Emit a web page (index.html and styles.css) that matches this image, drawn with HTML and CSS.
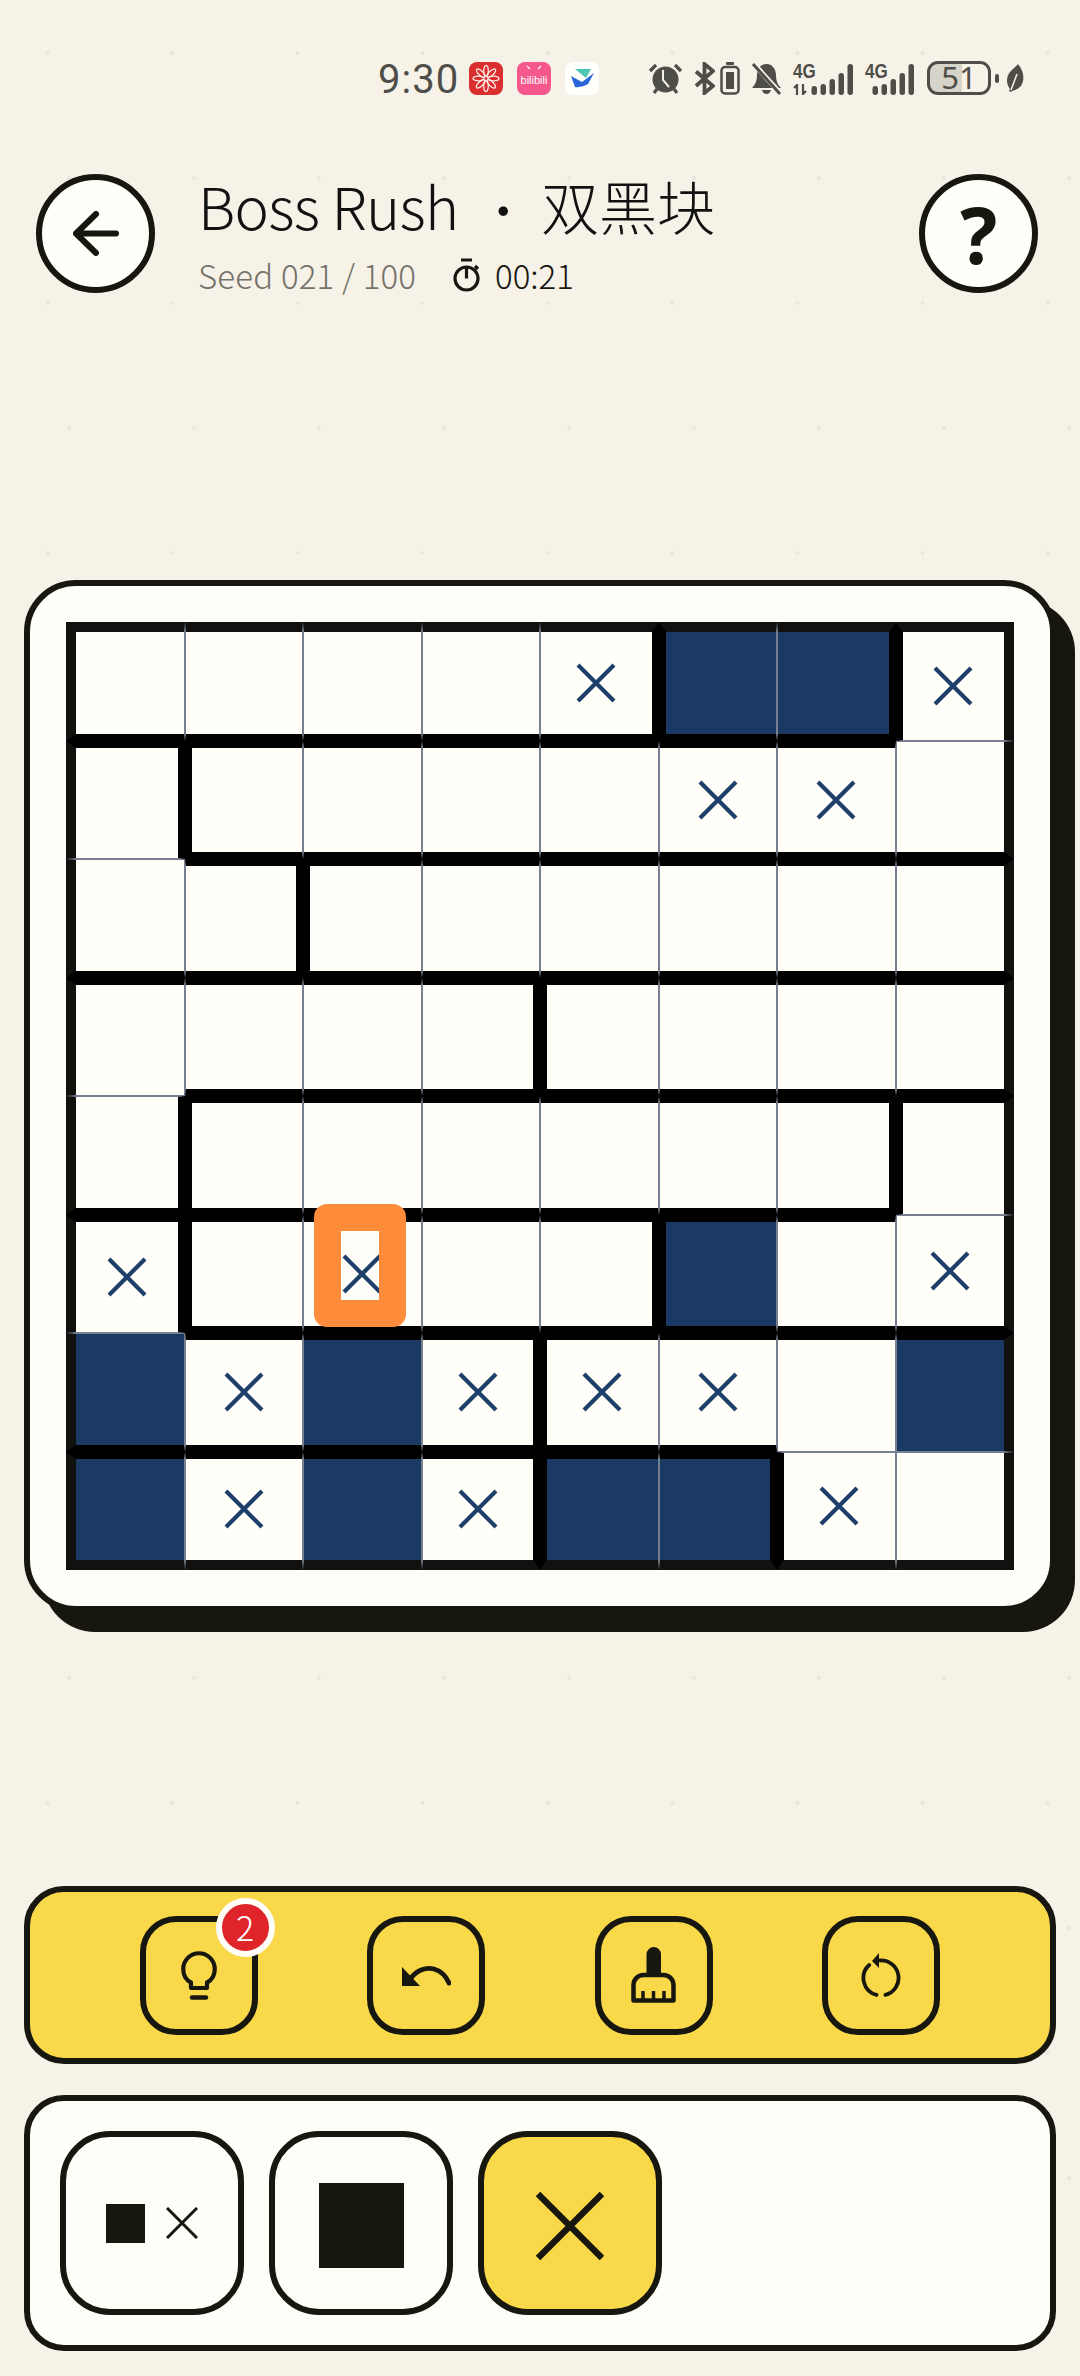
FILE: index.html
```html
<!DOCTYPE html>
<html lang="zh">

<head>
  <meta charset="UTF-8">
  <meta name="viewport" content="width=device-width, initial-scale=1.0">
  <title>Boss Rush</title>
  <link rel="stylesheet" href="styles.css">
</head>

<body>
  <svg class="defs">
    <symbol id="x" viewBox="0 0 40 40">
      <path d="M2 2L38 38M38 2L2 38" fill="none" stroke="currentColor" stroke-width="4.2" />
    </symbol>
  </svg>

  <!-- Barra de estado -->
  <div class="status">
    <span class="time">9:30</span>
    <div class="apps">
      <svg class="app" viewBox="0 0 34 33">
        <rect width="34" height="33" rx="8" fill="#d92f2e" />
        <g fill="none" stroke="#ffe9e4" stroke-width="1.300">
          <ellipse cx="17" cy="9" rx="2.300" ry="5.500" />
          <ellipse cx="17" cy="9" rx="2.300" ry="5.500" transform="rotate(45 17 16.500)" />
          <ellipse cx="17" cy="9" rx="2.300" ry="5.500" transform="rotate(90 17 16.500)" />
          <ellipse cx="17" cy="9" rx="2.300" ry="5.500" transform="rotate(135 17 16.500)" />
          <ellipse cx="17" cy="9" rx="2.300" ry="5.500" transform="rotate(180 17 16.500)" />
          <ellipse cx="17" cy="9" rx="2.300" ry="5.500" transform="rotate(225 17 16.500)" />
          <ellipse cx="17" cy="9" rx="2.300" ry="5.500" transform="rotate(270 17 16.500)" />
          <ellipse cx="17" cy="9" rx="2.300" ry="5.500" transform="rotate(315 17 16.500)" />
        </g>
      </svg>
      <svg class="app" viewBox="0 0 34 33">
        <rect width="34" height="33" rx="8" fill="#f4588c" />
        <path d="M10 4L13 7M24 4L21 7" stroke="#ffe3ec" stroke-width="1.500" />
        <text x="17" y="22" class="bili">bilibili</text>
      </svg>
      <svg class="app" viewBox="0 0 34 33">
        <rect width="34" height="33" rx="8" fill="#fffffb" />
        <path d="M10 7H26L21 16Z" fill="#4dc6b4" />
        <path d="M6 14L17 20L29 11L23 22Q17 26 10 25Z" fill="#2a66d9" />
      </svg>
    </div>
    <div class="sysicons">
      <svg class="sys alarm" viewBox="0 0 35 33">
        <path d="M2 9L8 3M33 9L27 3M6 31L9 27M29 31L26 27" fill="none" stroke="#4f4d48" stroke-width="3.200" />
        <circle cx="17.500" cy="17.500" r="13" fill="#4f4d48" />
        <path d="M15 8V18L21 25" fill="none" stroke="#f6f2e8" stroke-width="2" />
      </svg>
      <svg class="sys bt" viewBox="0 0 21 33">
        <path d="M2 9.500L19 24L10.500 31V2L19 9L2 24" fill="none" stroke="#4f4d48" stroke-width="3.800" />
      </svg>
      <svg class="sys cell-batt" viewBox="0 0 20 33">
        <rect x="6" y="0" width="8" height="3" rx="1" fill="#4f4d48" />
        <rect x="1.500" y="5" width="17" height="26.500" rx="3.500" fill="none" stroke="#4f4d48" stroke-width="2.500" />
        <rect x="6" y="10" width="8" height="17" fill="#4f4d48" />
      </svg>
      <svg class="sys mute" viewBox="0 0 31 33">
        <path d="M15.500 2C9 2 6 8 6 13C6 19 4 23 1 26H30C27 23 25 19 25 13C25 8 22 2 15.500 2Z" fill="#4f4d48" />
        <path d="M11 28H20Q19 32 15.500 32Q12 32 11 28Z" fill="#4f4d48" />
        <path d="M3 2L30 32" stroke="#f6f2e8" stroke-width="5" />
        <path d="M2 2L29 32" stroke="#4f4d48" stroke-width="3" />
      </svg>
      <div class="signal sig-a">
        <span class="net">4G</span>
        <svg class="updown" viewBox="0 0 14 11">
          <path d="M4 11V1L1 4M10 0V10L13 7" fill="none" stroke="#4f4d48" stroke-width="2.200" />
        </svg>
        <svg class="bars" viewBox="0 0 60 31">
          <rect x="18.500" y="22" width="5.500" height="9" rx="2.700" />
          <rect x="27.500" y="20" width="5.500" height="11" rx="2.700" />
          <rect x="36.500" y="15" width="5.500" height="16" rx="2.700" />
          <rect x="45.500" y="9" width="5.500" height="22" rx="2.700" />
          <rect x="54.500" y="0" width="5.500" height="31" rx="2.700" />
        </svg>
      </div>
      <div class="signal sig-b">
        <span class="net">4G</span>
        <svg class="bars" viewBox="0 0 50 31">
          <rect x="7.500" y="22" width="5.500" height="9" rx="2.700" />
          <rect x="16.500" y="20" width="5.500" height="11" rx="2.700" />
          <rect x="25.500" y="15" width="5.500" height="16" rx="2.700" />
          <rect x="34.500" y="9" width="5.500" height="22" rx="2.700" />
          <rect x="43.500" y="0" width="5.500" height="31" rx="2.700" />
        </svg>
      </div>
      <div class="battery"><span>51</span></div>
      <div class="battery-nub"></div>
      <svg class="sys leaf" viewBox="0 0 18 28">
        <path d="M12 0C17 6 18 12 17 17C16 23 11 26 6 27L5 28L3 27L4 25C0 20 0 13 4 8C6 5 10 3 12 0Z" fill="#4f4d48" />
        <path d="M5 26L11 10" stroke="#f6f2e8" stroke-width="1.500" />
      </svg>
    </div>
  </div>

  <header class="header">
    <button class="round-btn">
      <svg class="back-icon" viewBox="0 0 46 45">
        <path d="M43 22.500H3M23 3L3 22.500L23 42" fill="none" stroke="#171710" stroke-width="6" stroke-linecap="round" stroke-linejoin="round" />
      </svg>
    </button>
    <div class="heading">
      <h1 class="title"><span class="latin">Boss Rush</span> <span class="dot">・</span> 双黑块</h1>
      <div class="sub">
        <span class="seed">Seed 021 / 100</span>
        <svg class="timer" viewBox="0 0 27 34">
          <path d="M8 2H19M13.500 9V20.500M22 8L25 11" fill="none" stroke="#171710" stroke-width="3.200" />
          <circle cx="13.500" cy="20.500" r="11.500" fill="none" stroke="#171710" stroke-width="3.200" />
        </svg>
        <span class="clock">00:21</span>
      </div>
    </div>
    <button class="round-btn help">?</button>
  </header>

  <main>
    <section class="board">
      <div class="grid">
        <!-- fila 1 -->
        <div class="cell wb"></div>
        <div class="cell wb"></div>
        <div class="cell wb"></div>
        <div class="cell wb"></div>
        <div class="cell wb wr"><svg class="mark"><use href="#x" /></svg></div>
        <div class="cell wb wl on"></div>
        <div class="cell wb wr on"></div>
        <div class="cell wl"><svg class="mark"><use href="#x" /></svg></div>
        <!-- fila 2 -->
        <div class="cell wt wr"></div>
        <div class="cell wt wb wl"></div>
        <div class="cell wt wb"></div>
        <div class="cell wt wb"></div>
        <div class="cell wt wb"></div>
        <div class="cell wt wb"><svg class="mark"><use href="#x" /></svg></div>
        <div class="cell wt wb"><svg class="mark"><use href="#x" /></svg></div>
        <div class="cell wb"></div>
        <!-- fila 3 -->
        <div class="cell wb"></div>
        <div class="cell wt wb wr"></div>
        <div class="cell wt wb wl"></div>
        <div class="cell wt wb"></div>
        <div class="cell wt wb"></div>
        <div class="cell wt wb"></div>
        <div class="cell wt wb"></div>
        <div class="cell wt wb"></div>
        <!-- fila 4 -->
        <div class="cell wt"></div>
        <div class="cell wt wb"></div>
        <div class="cell wt wb"></div>
        <div class="cell wt wb wr"></div>
        <div class="cell wt wb wl"></div>
        <div class="cell wt wb"></div>
        <div class="cell wt wb"></div>
        <div class="cell wt wb"></div>
        <!-- fila 5 -->
        <div class="cell wb wr"></div>
        <div class="cell wt wb wl"></div>
        <div class="cell wt wb"></div>
        <div class="cell wt wb"></div>
        <div class="cell wt wb"></div>
        <div class="cell wt wb"></div>
        <div class="cell wt wb wr"></div>
        <div class="cell wt wl"></div>
        <!-- fila 6 -->
        <div class="cell wt wr"><svg class="mark"><use href="#x" /></svg></div>
        <div class="cell wt wb wl"></div>
        <div class="cell wt wb">
          <svg class="mark"><use href="#x" /></svg>
          <div class="cursor"></div>
        </div>
        <div class="cell wt wb"></div>
        <div class="cell wt wb wr"></div>
        <div class="cell wt wb wl on"></div>
        <div class="cell wt wb"></div>
        <div class="cell wb"><svg class="mark"><use href="#x" /></svg></div>
        <!-- fila 7 -->
        <div class="cell wb on"></div>
        <div class="cell wt wb"><svg class="mark"><use href="#x" /></svg></div>
        <div class="cell wt wb on"></div>
        <div class="cell wt wb wr"><svg class="mark"><use href="#x" /></svg></div>
        <div class="cell wt wb wl"><svg class="mark"><use href="#x" /></svg></div>
        <div class="cell wt wb"><svg class="mark"><use href="#x" /></svg></div>
        <div class="cell wt"></div>
        <div class="cell wt on"></div>
        <!-- fila 8 -->
        <div class="cell wt on"></div>
        <div class="cell wt"><svg class="mark"><use href="#x" /></svg></div>
        <div class="cell wt on"></div>
        <div class="cell wt wr"><svg class="mark"><use href="#x" /></svg></div>
        <div class="cell wt wl on"></div>
        <div class="cell wt wr on"></div>
        <div class="cell wl"><svg class="mark"><use href="#x" /></svg></div>
        <div class="cell"></div>
      </div>
    </section>

    <section class="toolbar">
      <button class="tool">
        <svg class="ico-bulb" viewBox="0 0 36 49">
          <path d="M10 37V31.500C5 29 2.250 24 2.250 18A15.750 15.750 0 0 1 33.750 18C33.750 24 31 29 26 31.500V37Z" fill="none" stroke="#171710" stroke-width="4.200" stroke-linejoin="round" />
          <path d="M11 46.500H25" stroke="#171710" stroke-width="4.500" stroke-linecap="round" />
        </svg>
        <span class="badge">2</span>
      </button>
      <button class="tool">
        <svg class="ico-undo" viewBox="0 0 50 21">
          <path d="M1 2V21H19Z" fill="#171710" />
          <path d="M10 13C16 5 25 2 33 4C40 6 45 11 48 18" fill="none" stroke="#171710" stroke-width="4.800" stroke-linecap="round" />
        </svg>
      </button>
      <button class="tool">
        <svg class="ico-brush" viewBox="0 0 45 56">
          <path d="M15.500 28V7.250a7.250 7.250 0 0 1 14.500 0V28Z" fill="#171710" />
          <path d="M2.500 53.500V38a10 10 0 0 1 10-10H32.500a10 10 0 0 1 10 10V53.500Z" fill="none" stroke="#171710" stroke-width="4.500" stroke-linejoin="round" />
          <path d="M12 53V44M22.500 53V44M33 53V44" stroke="#171710" stroke-width="3.500" />
        </svg>
      </button>
      <button class="tool">
        <svg class="ico-reset" viewBox="0 0 40 45">
          <path d="M19 7.500A17.500 17.500 0 0 1 24.500 41.900M15.500 41.900A17.500 17.500 0 0 1 8.200 12" fill="none" stroke="#171710" stroke-width="3.800" stroke-linecap="round" />
          <path d="M11 8L18 0V15Z" fill="#171710" />
        </svg>
      </button>
    </section>

    <section class="modes">
      <button class="mode">
        <span class="mini-square"></span>
        <svg class="mini-x" viewBox="0 0 32 32">
          <path d="M1 1L31 31M31 1L1 31" stroke="#171710" stroke-width="3" />
        </svg>
      </button>
      <button class="mode">
        <span class="big-square"></span>
      </button>
      <button class="mode active">
        <svg class="big-x" viewBox="0 0 68 68">
          <path d="M2 2L66 66M66 2L2 66" stroke="#171710" stroke-width="6.500" />
        </svg>
      </button>
    </section>
  </main>
</body>

</html>
```

FILE: styles.css
```css
body {
  margin: 0;
  width: 1080px;
  height: 2376px;
  overflow: hidden;
  font-family: "Noto Sans CJK SC", "Noto Sans", sans-serif;
  color: #171710;
  background-color: #f6f2e8;
  background-image:
    radial-gradient(circle, #e9e5da 1.5px, transparent 2.5px),
    radial-gradient(circle, #e9e5da 1.5px, transparent 2.5px);
  background-size: 125px 250px;
  background-position: -15px -72px, 6.5px 53px;
}

.defs {
  display: none;
}

button {
  padding: 0;
  font: inherit;
  color: inherit;
  cursor: pointer;
}

/* status bar */
.status {
  display: flex;
  align-items: center;
  height: 36px;
  padding: 60px 0 0 378px;
  color: #4f4d48;
}

.time {
  width: 78px;
  margin-top: 3px;
  font-family: Roboto, sans-serif;
  font-size: 40px;
  letter-spacing: 1px;
  line-height: 36px;
  white-space: nowrap;
}

.apps {
  display: flex;
  gap: 14px;
  margin-left: 13px;
}

.app {
  width: 34px;
  height: 33px;
}

.bili {
  font-family: "Liberation Sans", sans-serif;
  font-size: 11px;
  fill: #fff;
  text-anchor: middle;
}

.sysicons {
  display: flex;
  align-items: center;
  margin-left: 49px;
}

.sys {
  height: 33px;
  flex: none;
}

.alarm { width: 35px; }
.bt { width: 21px; margin-left: 11px; }
.cell-batt { width: 20px; margin-left: 5px; }
.mute { width: 31px; margin-left: 11px; }

.signal {
  position: relative;
  height: 33px;
  flex: none;
}

.sig-a { width: 60px; margin-left: 11px; }
.sig-b { width: 50px; margin-left: 12px; }

.net {
  position: absolute;
  left: 0;
  top: -1px;
  font-family: "Liberation Sans", sans-serif;
  font-size: 20px;
  font-weight: 700;
  line-height: 20px;
  transform: scaleX(0.85);
  transform-origin: left;
}

.updown {
  position: absolute;
  left: 0;
  bottom: 0;
  width: 14px;
  height: 11px;
}

.bars {
  position: absolute;
  right: 0;
  bottom: 0;
  height: 31px;
  fill: #4f4d48;
}

.sig-a .bars { width: 60px; }
.sig-b .bars { width: 50px; }

.battery {
  box-sizing: border-box;
  width: 64px;
  height: 34px;
  margin-left: 12px;
  border: 3px solid #4f4d48;
  border-radius: 11px;
  background: linear-gradient(to right, #d6d3c8 56%, transparent 56%);
  text-align: center;
  font-family: "Noto Sans", sans-serif;
  font-size: 31px;
  line-height: 27px;
}

.battery-nub {
  width: 4px;
  height: 9px;
  margin-left: 4px;
  border-radius: 2px;
  background: #4f4d48;
}

.leaf {
  width: 18px;
  height: 28px;
  margin-left: 7px;
}

/* header */
.header {
  display: flex;
  align-items: flex-start;
  height: 119px;
  padding: 78px 42px 0 36px;
}

.round-btn {
  box-sizing: border-box;
  flex: none;
  display: flex;
  align-items: center;
  justify-content: center;
  width: 119px;
  height: 119px;
  border: 6px solid #171710;
  border-radius: 50%;
  background: #fffef9;
}

.back-icon {
  width: 46px;
  height: 45px;
}

.help {
  font-family: "Noto Sans", sans-serif;
  font-size: 78px;
  font-weight: 700;
  line-height: 1;
}

.heading {
  flex: 1;
  margin-left: 43px;
}

.title {
  margin: -6px 0 0;
  font-size: 58px;
  font-weight: 300;
  line-height: 74px;
  white-space: pre;
  color: #111;
}

.latin {
  letter-spacing: -0.7px;
  margin-right: 7px;
}

.dot {
  font-size: 50px;
}

.sub {
  display: flex;
  align-items: center;
  height: 40px;
  margin-top: 10px;
  font-size: 33px;
  font-weight: 300;
}

.seed {
  color: #75726a;
  width: 255px;
  letter-spacing: 0.2px;
}

.timer {
  width: 27px;
  height: 34px;
}

.clock {
  margin-left: 15px;
}

/* board */
.board {
  margin: 287px 24px 0;
  padding: 36px;
  border: 6px solid #171710;
  border-radius: 52px;
  background: #fffef9;
  box-shadow: 19px 20px 0 #171710;
}

.grid {
  display: grid;
  grid-template-columns: repeat(8, 118.5px);
  grid-template-rows: repeat(8, 118.5px);
}

.cell {
  box-sizing: border-box;
  position: relative;
  display: flex;
  align-items: center;
  justify-content: center;
  border: 1px solid #76808f;
  background: #fffef9;
}

.on {
  background: #1a3a63;
}

.wt { border-top: 7px solid #000; }
.wr { border-right: 7px solid #000; }
.wb { border-bottom: 7px solid #000; }
.wl { border-left: 7px solid #000; }

.cell:nth-child(-n+8) { border-top: 10px solid #111110; }
.cell:nth-child(n+57) { border-bottom: 10px solid #111110; }
.cell:nth-child(8n+1) { border-left: 10px solid #111110; }
.cell:nth-child(8n) { border-right: 10px solid #111110; }

.mark {
  width: 40px;
  height: 40px;
  color: #1c406a;
}

.cursor {
  box-sizing: border-box;
  position: absolute;
  left: 10px;
  top: -18px;
  width: 92px;
  height: 123px;
  border: 27px solid #ff8c3a;
  border-radius: 13px;
}

/* tools */
.toolbar {
  box-sizing: border-box;
  display: flex;
  align-items: center;
  justify-content: space-evenly;
  height: 178px;
  margin: 274px 24px 0;
  border: 6px solid #171710;
  border-radius: 40px;
  background: #f9d949;
}

.tool {
  box-sizing: border-box;
  position: relative;
  display: flex;
  align-items: center;
  justify-content: center;
  width: 118px;
  height: 119px;
  border: 6px solid #171710;
  border-radius: 36px;
  background: transparent;
}

.ico-bulb { width: 36px; height: 49px; }
.ico-undo { width: 50px; height: 21px; }
.ico-brush { width: 45px; height: 56px; }
.ico-reset { width: 40px; height: 45px; }

.badge {
  box-sizing: border-box;
  position: absolute;
  top: -24px;
  right: -23px;
  width: 59px;
  height: 59px;
  border: 6px solid #fffef9;
  border-radius: 50%;
  background: #e0252a;
  color: #fff;
  font-size: 34px;
  font-weight: 300;
  line-height: 46px;
  text-align: center;
}

.modes {
  box-sizing: border-box;
  display: flex;
  align-items: center;
  gap: 25px;
  height: 256px;
  margin: 31px 24px 0;
  padding: 0 30px;
  border: 6px solid #171710;
  border-radius: 40px;
  background: #fffdf7;
}

.mode {
  box-sizing: border-box;
  display: flex;
  align-items: center;
  justify-content: center;
  width: 184px;
  height: 184px;
  border: 6px solid #171710;
  border-radius: 50px;
  background: #fffdf7;
}

.mode.active {
  background: #f9d949;
}

.mini-square {
  width: 39px;
  height: 39px;
  background: #171710;
}

.mini-x {
  width: 32px;
  height: 32px;
  margin-left: 21px;
}

.big-square {
  width: 85px;
  height: 85px;
  margin-top: 5px;
  background: #171710;
}

.big-x {
  width: 68px;
  height: 68px;
  margin-top: 5px;
}
```
